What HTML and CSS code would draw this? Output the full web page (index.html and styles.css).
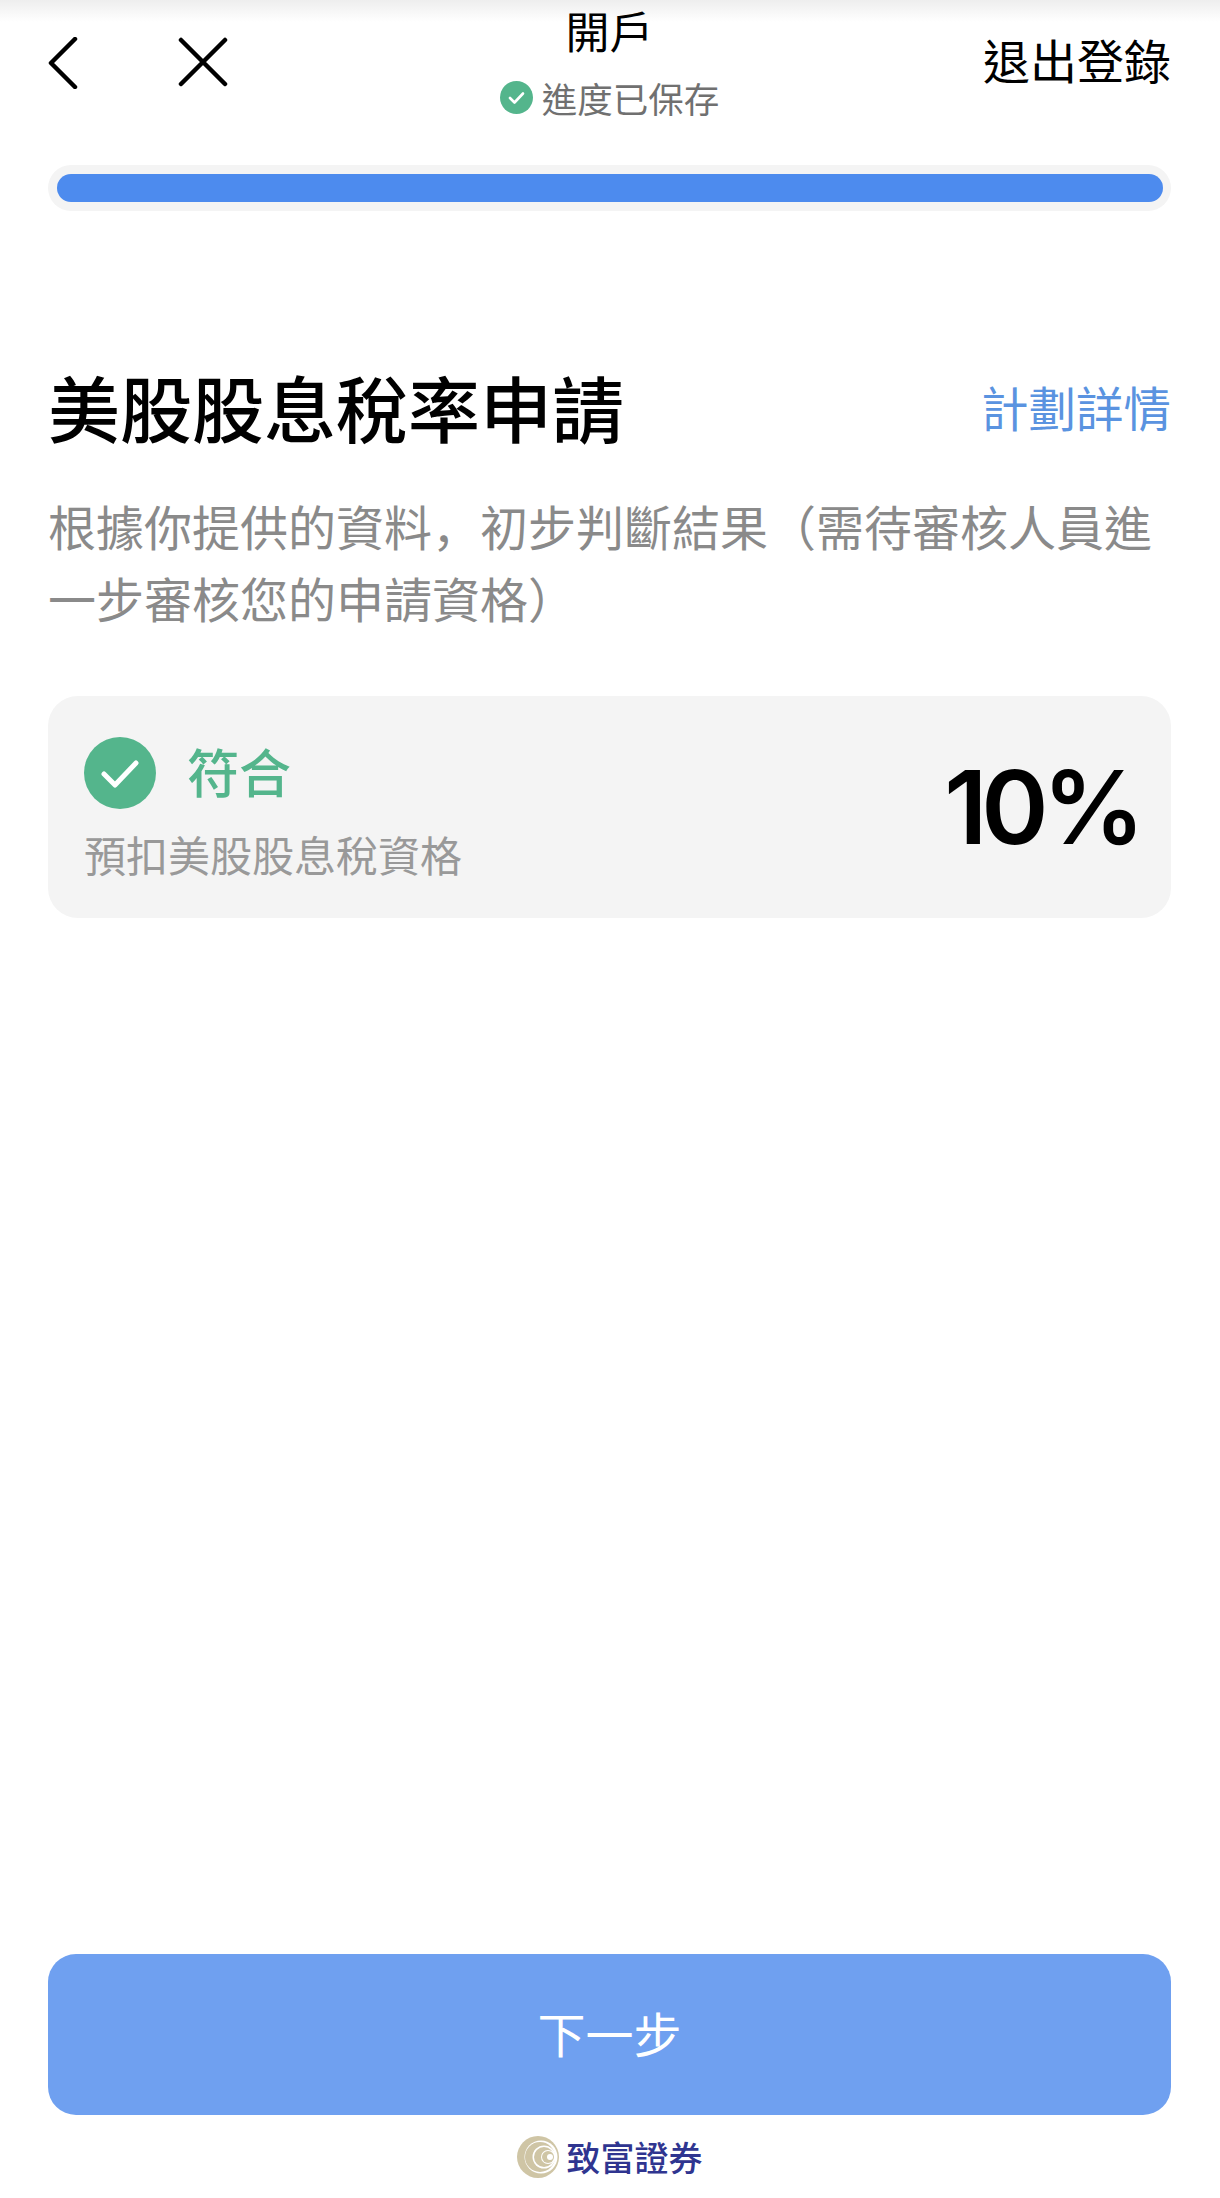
FILE: index.html
```html
<html>
<head>
<title>開戶</title>
<meta name="viewport" content="width=device-width, initial-scale=1">
<link rel="stylesheet" href="styles.css">
</head>
<body>
  <div class="page">
    <div class="header">
      <div class="nav">
        <svg class="back" width="30" height="52" viewBox="0 0 30 52"><polyline points="27,2 3,26 27,50" fill="none" stroke="#000" stroke-width="4.5" stroke-linecap="round" stroke-linejoin="round"></polyline></svg>
        <svg class="close" width="50" height="50" viewBox="0 0 50 50"><path d="M3 3 L47 47 M47 3 L3 47" fill="none" stroke="#000" stroke-width="4.5" stroke-linecap="round"></path></svg>
      </div>
      <div class="center">
        <div class="title">開戶</div>
        <div class="saved">
          <svg class="saved-icon" width="33" height="33" viewBox="0 0 33 33"><circle cx="16.5" cy="16.5" r="16.5" fill="#54b58c"></circle><polyline points="10,17 14.5,21.5 23,12.5" fill="none" stroke="#fff" stroke-width="2.6" stroke-linecap="round" stroke-linejoin="round"></polyline></svg>
          <span>進度已保存</span>
        </div>
      </div>
      <a class="logout">退出登錄</a>
    </div>

    <div class="track"><div class="bar"></div></div>

    <div class="head-row">
      <h1>美股股息稅率申請</h1>
      <a class="link">計劃詳情</a>
    </div>
    <p class="desc">根據你提供的資料<span class="comma">，</span>初步判斷結果（需待審核人員進一步審核您的申請資格）</p>

    <div class="card">
      <div class="card-left">
        <div class="status">
          <svg width="72" height="72" viewBox="0 0 72 72"><circle cx="36" cy="36" r="36" fill="#54b58c"></circle><polyline points="20,37 31,48 52,26" fill="none" stroke="#fff" stroke-width="5" stroke-linecap="round" stroke-linejoin="round"></polyline></svg>
          <span class="status-text">符合</span>
        </div>
        <div class="sub">預扣美股股息稅資格</div>
      </div>
      <div class="rate">10%</div>
    </div>

    <div class="bottom">
      <div class="next">下一步</div>
      <div class="brand">
        <svg width="42" height="42" viewBox="0 0 42 42">
          <circle cx="21" cy="21" r="21" fill="#cfc5a5"></circle>
          <circle cx="24" cy="21" r="16.5" fill="#fff"></circle>
          <circle cx="23" cy="21" r="15" fill="#cfc5a5"></circle>
          <circle cx="27" cy="21" r="11.5" fill="#fff"></circle>
          <circle cx="27" cy="21" r="10" fill="#cfc5a5"></circle>
          <circle cx="31" cy="21" r="7" fill="#fff"></circle>
          <circle cx="31" cy="21" r="6" fill="#cfc5a5"></circle>
          <circle cx="33" cy="21" r="3" fill="#fff"></circle>
        </svg>
        <span>致富證券</span>
      </div>
    </div>
  </div>
</body>
</html>
```

FILE: styles.css
```css
html, body {
  margin: 0;
  padding: 0;
  background: #fff;
}
body {
  font-family: "Noto Sans CJK TC", "Noto Sans", sans-serif;
  color: #000;
}
.page {
  display: flex;
  flex-direction: column;
  height: 2198px;
  padding: 0 49px 0 48px;
  box-sizing: border-box;
  background: linear-gradient(#eeeeee 0, #ffffff 22px);
}
.header {
  display: grid;
  grid-template-columns: 1fr auto 1fr;
  height: 140px;
}
.nav {
  display: flex;
  align-items: flex-start;
  gap: 100px;
  padding-top: 37px;
}
.center {
  text-align: center;
}
.title {
  font-size: 44px;
  line-height: 60px;
}
.saved {
  display: flex;
  align-items: center;
  justify-content: center;
  gap: 9px;
  height: 74px;
  font-size: 35.5px;
  color: #707070;
}
.logout {
  justify-self: end;
  font-size: 47px;
  line-height: 118px;
}
.track {
  margin-top: 25px;
  padding: 9px 8px 9px 9px;
  height: 46px;
  box-sizing: border-box;
  background: #f4f4f4;
  border-radius: 23px;
}
.bar {
  height: 28px;
  background: #4d8bee;
  border-radius: 14px;
}
.head-row {
  display: flex;
  align-items: center;
  justify-content: space-between;
  margin-top: 145px;
  height: 100px;
}
h1 {
  margin: 0;
  font-size: 72px;
  line-height: 100px;
  font-weight: 500;
}
.link {
  font-size: 47.5px;
  color: #5a93e0;
}
.desc {
  margin: 33px 0 0 0;
  font-size: 48px;
  line-height: 72px;
  color: #8a8a8a;
}
.comma {
  font-family: "Noto Sans CJK SC", sans-serif;
}
.card {
  display: flex;
  align-items: center;
  justify-content: space-between;
  margin-top: 63px;
  height: 222px;
  padding: 0 32px 0 36px;
  box-sizing: border-box;
  background: #f4f4f4;
  border-radius: 30px;
}
.card-left {
  padding-top: 3px;
}
.status {
  display: flex;
  align-items: center;
  gap: 31px;
  font-size: 52px;
  font-weight: 500;
  color: #54b58c;
}
.status-text {
  margin-bottom: 5px;
}
.sub {
  margin-top: 11px;
  font-size: 42px;
  line-height: 60px;
  color: #999;
}
.rate {
  font-family: Inter, sans-serif;
  font-size: 102px;
  font-weight: 600;
  letter-spacing: -6px;
}
.bottom {
  margin-top: auto;
}
.next {
  height: 161px;
  line-height: 157px;
  text-align: center;
  font-size: 48px;
  color: #fff;
  background: #6fa0f0;
  border-radius: 28px;
}
.brand {
  display: flex;
  align-items: center;
  justify-content: center;
  gap: 8px;
  height: 83px;
  font-size: 34px;
  font-weight: 500;
  color: #2f3590;
}
```
